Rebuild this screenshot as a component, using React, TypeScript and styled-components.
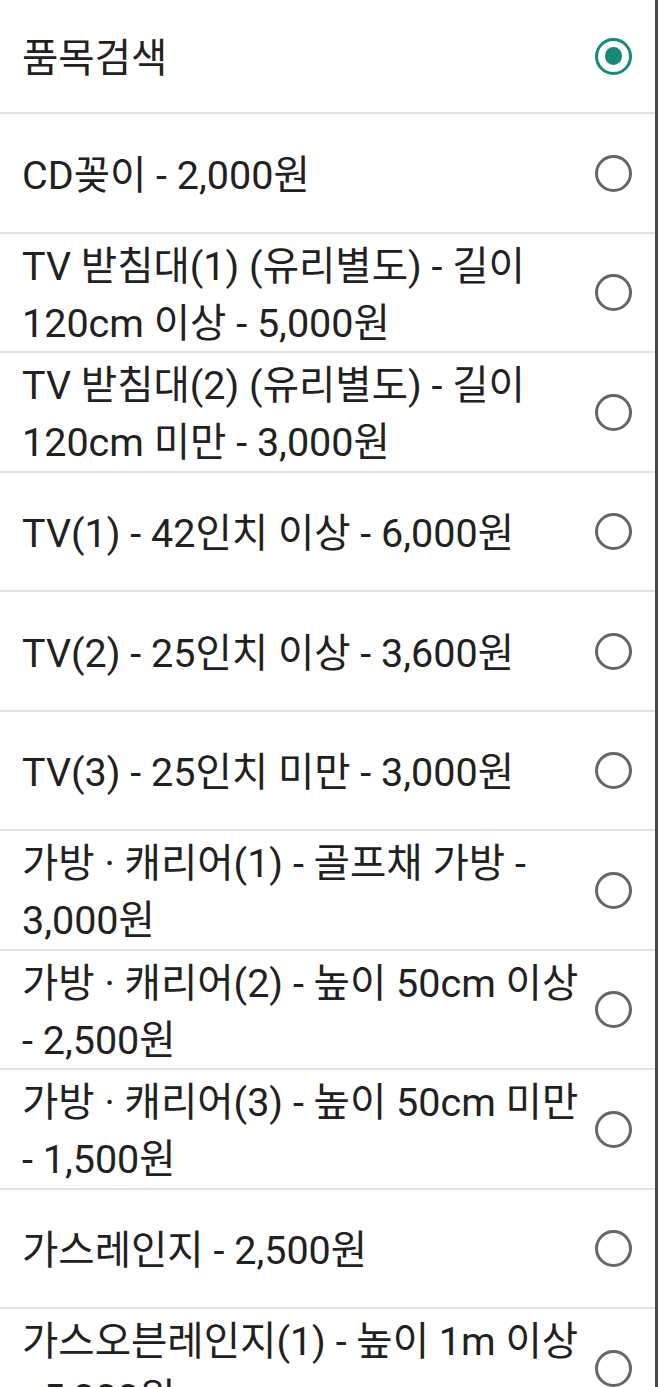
import React from "react";
import styled, { createGlobalStyle } from "styled-components";

const GlobalStyle = createGlobalStyle`
  html, body {
    margin: 0;
    padding: 0;
    background: #ffffff;
  }
  body {
    font-family: Roboto, "Noto Sans CJK KR", "Noto Sans", sans-serif;
    overflow: hidden;
  }
`;

const Page = styled.div`
  width: 658px;
  height: 1387px;
  overflow: hidden;
  display: flex;
  background: #ffffff;
`;

const List = styled.ul`
  list-style: none;
  margin: 0;
  padding: 0;
  flex: 1;
  display: flex;
  flex-direction: column;
`;

const EdgeBar = styled.div`
  width: 3px;
  flex: none;
  background: #4a4a4a;
`;

const Item = styled.li<{ $first?: boolean }>`
  box-sizing: border-box;
  flex: none;
  height: ${(p) => (p.$first ? "114.3px" : "119.5px")};
  display: flex;
  align-items: center;
  gap: 8px;
  padding: 0 23px 0 22px;
  border-bottom: 2px solid #e3e3e3;
`;

const Label = styled.span`
  flex: 1;
  min-width: 0;
  font-family: Roboto, "Noto Sans CJK KR", sans-serif;
  font-size: 39.5px;
  line-height: 57px;
  color: #212121;
  word-break: keep-all;
  padding-top: 4px;
`;

const RadioOuter = styled.span<{ $checked?: boolean }>`
  box-sizing: border-box;
  flex: none;
  width: 37px;
  height: 37px;
  border-radius: 50%;
  border: 3.8px solid ${(p) => (p.$checked ? "#158a7b" : "#666666")};
  display: flex;
  align-items: center;
  justify-content: center;
`;

const RadioDot = styled.span`
  width: 17.5px;
  height: 17.5px;
  border-radius: 50%;
  background: #158a7b;
`;

const items = [
  "품목검색",
  "CD꽂이 - 2,000원",
  "TV 받침대(1) (유리별도) - 길이 120cm 이상 - 5,000원",
  "TV 받침대(2) (유리별도) - 길이 120cm 미만 - 3,000원",
  "TV(1) - 42인치 이상 - 6,000원",
  "TV(2) - 25인치 이상 - 3,600원",
  "TV(3) - 25인치 미만 - 3,000원",
  "가방 · 캐리어(1) - 골프채 가방 - 3,000원",
  "가방 · 캐리어(2) - 높이 50cm 이상 - 2,500원",
  "가방 · 캐리어(3) - 높이 50cm 미만 - 1,500원",
  "가스레인지 - 2,500원",
  "가스오븐레인지(1) - 높이 1m 이상 - 5,000원",
];

export default function App() {
  return (
    <>
      <GlobalStyle />
      <Page>
        <List>
          {items.map((text, i) => (
            <Item key={text} $first={i === 0}>
              <Label>{text}</Label>
              <RadioOuter $checked={i === 0}>{i === 0 && <RadioDot />}</RadioOuter>
            </Item>
          ))}
        </List>
        <EdgeBar />
      </Page>
    </>
  );
}
